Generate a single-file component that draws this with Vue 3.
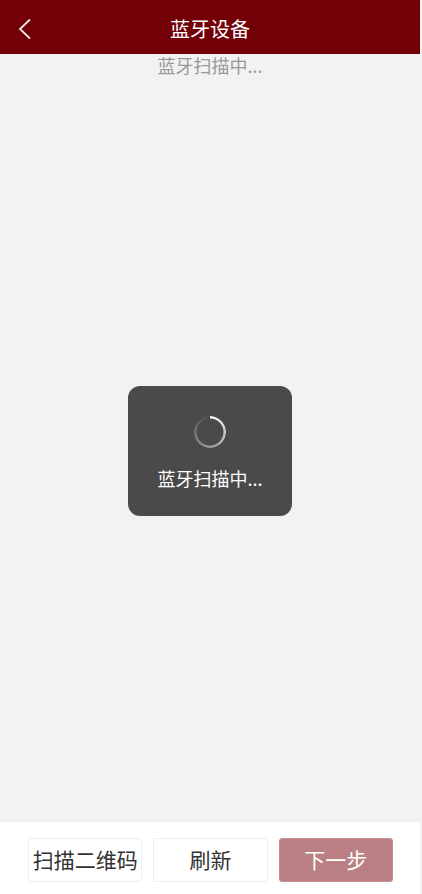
<template>
    <div class="page">
        <header class="nav-bar">
            <button class="back" type="button" aria-label="返回">
                <svg width="14" height="22" viewBox="0 0 14 22" fill="none">
                    <path d="M13 1.5 L3 11 L13 20.5" stroke="#f4e6e6" stroke-width="1.8" />
                </svg>
            </button>
            <h1 class="title">{{ title }}</h1>
        </header>

        <main class="content">
            <p class="status">{{ statusText }}</p>
        </main>

        <footer class="footer">
            <button class="btn" type="button">扫描二维码</button>
            <button class="btn" type="button" @click="startScan">刷新</button>
            <button class="btn btn-primary" type="button" :disabled="!selectedDevice">下一步</button>
        </footer>

        <div v-if="scanning" class="toast" role="status">
            <span class="spinner"></span>
            <span class="toast-text">{{ statusText }}</span>
        </div>
    </div>
</template>

<script setup>
import { ref } from 'vue';

const title = '蓝牙设备';
const statusText = ref('蓝牙扫描中...');
const scanning = ref(true);
const selectedDevice = ref(null);

const startScan = () => {
    selectedDevice.value = null;
    scanning.value = true;
};
</script>

<style>
body {
    margin: 0;
    background-color: #f2f2f2;
}
</style>

<style scoped>
.page {
    position: relative;
    box-sizing: border-box;
    display: flex;
    flex-direction: column;
    min-height: 100vh;
    padding-right: 2px;
    background-color: #f2f2f2;
    font-family: "Noto Sans CJK SC", sans-serif;
}

.nav-bar {
    display: grid;
    grid-template-columns: 48px 1fr 48px;
    align-items: center;
    height: 54px;
    background-color: #730006;
    color: #fff;
}

.back {
    display: flex;
    justify-content: center;
    padding: 4px 0 0;
    border: none;
    background: none;
    cursor: pointer;
}

.title {
    margin: 0;
    padding-top: 4px;
    font-size: 20px;
    font-weight: 400;
    line-height: 28px;
    text-align: center;
}

.content {
    flex: 1;
}

.status {
    margin: 0;
    color: #999;
    font-size: 18px;
    line-height: 22px;
    text-align: center;
}

.footer {
    display: flex;
    gap: 11px;
    padding: 16px 27px 12px 28px;
    background-color: #fff;
}

.btn {
    flex: 1 1 0;
    height: 44px;
    padding: 0 0 3px;
    border: 1px solid #ebedf0;
    border-radius: 3px;
    background-color: #fff;
    color: #323233;
    font-family: inherit;
    font-size: 21px;
    line-height: 28px;
    white-space: nowrap;
    cursor: pointer;
}

.btn-primary {
    border-color: #c48d90;
    background-color: #b97f82;
    color: #fff;
}

.btn-primary:disabled {
    cursor: not-allowed;
}

.toast {
    position: absolute;
    top: calc(50% + 4px);
    left: calc(50% - 1px);
    transform: translate(-50%, -50%);
    box-sizing: border-box;
    display: flex;
    flex-direction: column;
    align-items: center;
    gap: 17px;
    min-width: 164px;
    padding: 30px 28px 25px;
    border-radius: 12px;
    background-color: #4a4a4a;
    color: #fff;
}

.spinner {
    width: 32px;
    height: 32px;
    border-radius: 50%;
    background: conic-gradient(#fff, #ccc 25%, #999 50%, #777 75%, #4a4a4a);
    mask: radial-gradient(circle closest-side, transparent 13px, #000 14px);
}

.toast-text {
    font-size: 18px;
    line-height: 26px;
    white-space: nowrap;
}
</style>
